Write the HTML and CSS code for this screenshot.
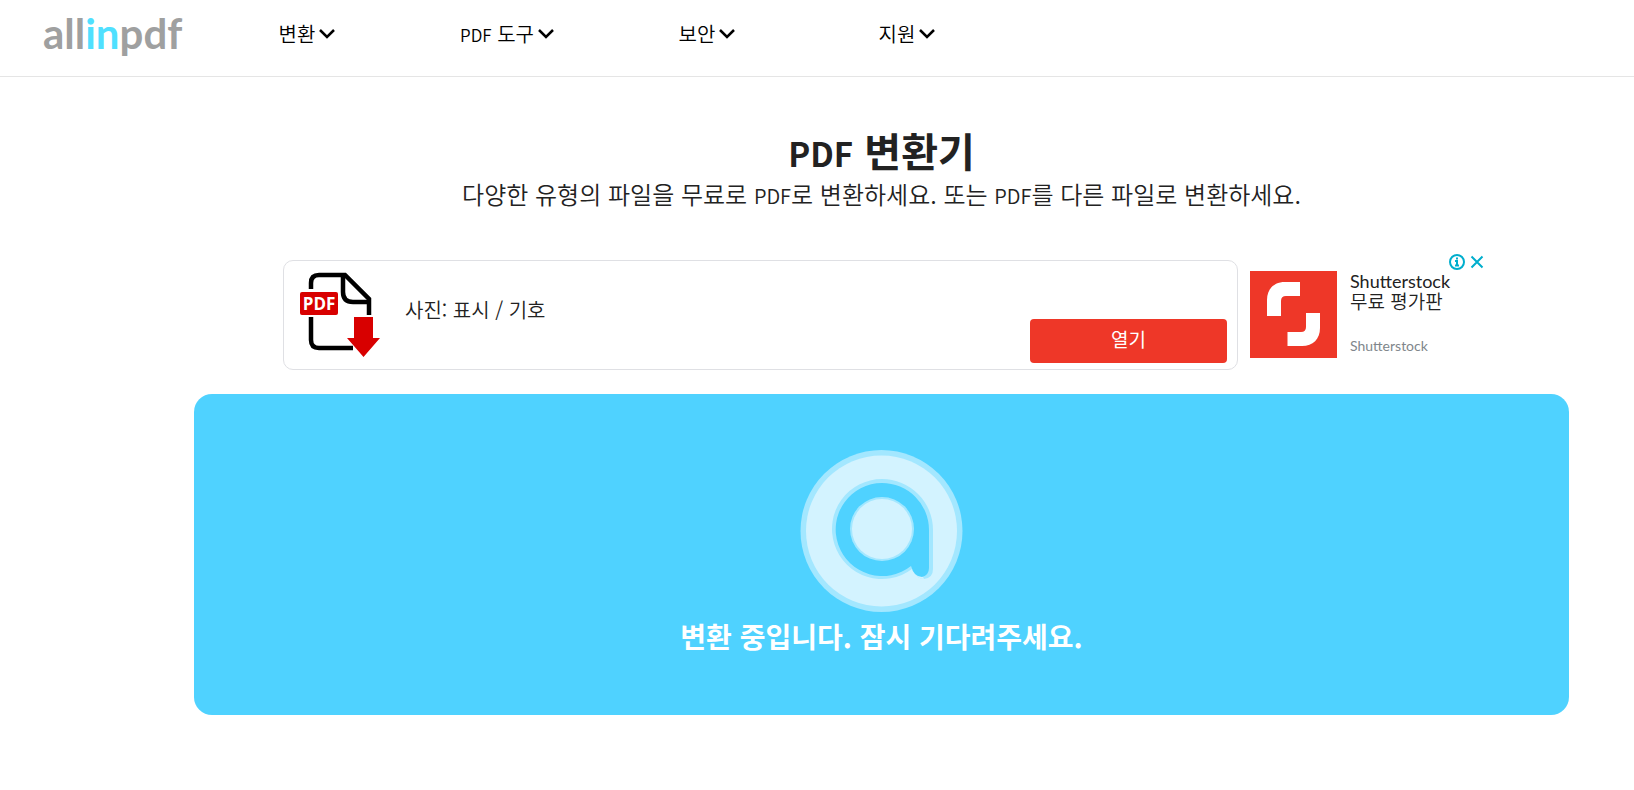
FILE: index.html
```html
<!DOCTYPE html>
<html lang="ko">
<head>
    <meta charset="UTF-8">
    <meta name="viewport" content="width=device-width, initial-scale=1.0">
    <title>PDF 변환기</title>
    <link rel="stylesheet" href="styles.css">
</head>
<body>
    <header class="header">
        <a href="#" class="logo">all<span>in</span>pdf</a>
        <nav class="main-nav">
            <a href="#" class="nav-link">변환<svg class="chevron" viewBox="0 0 16 12"><path d="M1 2l7 7 7-7"/></svg></a>
            <a href="#" class="nav-link"><span><span class="latin">PDF</span> 도구</span><svg class="chevron" viewBox="0 0 16 12"><path d="M1 2l7 7 7-7"/></svg></a>
            <a href="#" class="nav-link">보안<svg class="chevron" viewBox="0 0 16 12"><path d="M1 2l7 7 7-7"/></svg></a>
            <a href="#" class="nav-link">지원<svg class="chevron" viewBox="0 0 16 12"><path d="M1 2l7 7 7-7"/></svg></a>
        </nav>
    </header>

    <main class="content">
        <h1><span class="latin">PDF</span> 변환기</h1>
        <p class="subtitle">다양한 유형의 파일을 무료로 <span class="latin">PDF</span>로 변환하세요. 또는 <span class="latin">PDF</span>를 다른 파일로 변환하세요.</p>

        <!-- Ad banner -->
        <section class="ad">
            <div class="ad-card">
                <svg class="pdf-icon" viewBox="0 0 82 86">
                    <g fill="none" stroke="#000" stroke-width="4.500">
                        <path d="M12 17V11Q12 3 20 3H46L70 27V43"/>
                        <path d="M44 3V20Q44 30 54 30H70"/>
                        <path d="M12 45V68Q12 76 20 76H54"/>
                    </g>
                    <rect x="1" y="20" width="38" height="23" rx="2" fill="#d80000"/>
                    <text x="20" y="38" class="pdf-label">PDF</text>
                    <path d="M55 45H74V66H81L64.500 85 48 66H55z" fill="#d80000"/>
                </svg>
                <p class="ad-text">사진: 표시 / 기호</p>
                <button type="button" class="open-btn">열기</button>
            </div>
            <div class="ad-brand">
                <svg class="brand-logo" viewBox="0 0 87 87">
                    <rect width="87" height="87" fill="#ee3728"/>
                    <path fill="#fff" d="M50 11H35C24 11 17 18 17 29V45H31V30Q31 25 36 25H50zM37.500 75H52C63 75 70 68 70 57V42H56V56Q56 61 51 61H37.500z"/>
                </svg>
                <div class="brand-info">
                    <p class="brand-title">Shutterstock<br><span>무료 평가판</span></p>
                    <p class="brand-name">Shutterstock</p>
                </div>
            </div>
            <div class="ad-controls">
                <button type="button" aria-label="광고 정보">
                    <svg width="16" height="16" viewBox="0 0 16 16"><circle cx="8" cy="8" r="7"/><path d="M6 7h2v4.500M6 11.500h4M7 4.500h2"/></svg>
                </button>
                <button type="button" aria-label="닫기">
                    <svg width="16" height="16" viewBox="0 0 16 16"><path d="M2.500 2.500l11 11M13.500 2.500l-11 11"/></svg>
                </button>
            </div>
        </section>

        <!-- Progress panel -->
        <section class="progress">
            <svg class="spinner" viewBox="0 0 163 162">
                <circle cx="81.500" cy="81" r="81" fill="#a3e7ff"/>
                <circle cx="81.500" cy="81" r="75.500" fill="#d3f3ff"/>
                <path d="M82 29A50 50 0 1 0 112 119Q117 129 124 129Q133 128 133 119V80A51 51 0 0 0 82 29z" fill="#a3e7ff"/>
                <path d="M112 119Q117 129 124 129L118 116z" fill="#d3f3ff"/>
                <path d="M82 33A46.500 46.500 0 1 0 111 116Q114 127 122 127Q129 125 129 118V80A47 47 0 0 0 82 33z" fill="#4fd2ff"/>
                <circle cx="82" cy="79" r="32" fill="#a3e7ff"/>
                <circle cx="82" cy="79" r="30" fill="#d3f3ff"/>
            </svg>
            <p class="progress-text">변환 중입니다. 잠시 기다려주세요.</p>
        </section>
    </main>
</body>
</html>
```
FILE: styles.css
```css
:root {
    --blue: #4fd2ff;
    --red: #ee3728;
    --text: #222;
    --border: #dfe0e4;
}

* {
    margin: 0;
    padding: 0;
    box-sizing: border-box;
}

body {
    font-family: "Noto Sans CJK KR", sans-serif;
    font-weight: 350;
    color: var(--text);
    background: #fff;
}

button {
    font-family: inherit;
    border: none;
    cursor: pointer;
}

/* Keep smaller latin words from growing the line box */
.latin {
    line-height: 1;
}

/* Header */
.header {
    display: flex;
    align-items: flex-start;
    height: 77px;
    padding-left: 43px;
    border-bottom: 1px solid #e5e5e5;
}

.logo {
    width: 164px;
    padding-top: 8px;
    font-family: Lato, sans-serif;
    font-size: 42px;
    font-weight: 700;
    line-height: 50px;
    color: #9fa0a0;
    text-decoration: none;
}

.logo span {
    color: #4fe0ff;
}

.main-nav {
    display: flex;
}

.nav-link {
    display: flex;
    justify-content: center;
    align-items: center;
    gap: 4px;
    width: 200px;
    height: 68px;
    font-size: 20px;
    line-height: 28px;
    color: #000;
    text-decoration: none;
}

.nav-link .latin {
    font-size: 17px;
}

.chevron {
    width: 16px;
    height: 12px;
    fill: none;
    stroke: #000;
    stroke-width: 2.500;
}

/* Main content */
.content {
    padding: 48px 65px 0 194px;
    text-align: center;
}

h1 {
    font-size: 40px;
    font-weight: 700;
    line-height: 50px;
}

h1 .latin {
    font-size: 33px;
}

.subtitle {
    font-size: 24px;
    line-height: 38px;
}

.subtitle .latin {
    font-size: 20px;
}

/* Ad banner */
.ad {
    position: relative;
    display: flex;
    gap: 12px;
    margin: 47px 84px 24px 89px;
    text-align: left;
}

.ad-card {
    display: flex;
    flex: 1;
    align-items: center;
    height: 110px;
    padding: 0 10px 0 15px;
    border: 1px solid var(--border);
    border-radius: 10px;
}

.pdf-icon {
    width: 82px;
    height: 86px;
}

.pdf-label {
    font-family: "Open Sans", sans-serif;
    font-size: 17px;
    font-weight: 700;
    fill: #fff;
    text-anchor: middle;
}

.ad-text {
    flex: 1;
    padding: 0 0 12px 24px;
    font-size: 20px;
}

.open-btn {
    align-self: flex-end;
    width: 197px;
    height: 44px;
    margin-bottom: 6px;
    padding-bottom: 4px;
    border-radius: 4px;
    background: var(--red);
    color: #fff;
    font-size: 19px;
    line-height: 28px;
}

.ad-brand {
    display: flex;
    gap: 13px;
    width: 235px;
    padding-top: 11px;
}

.brand-logo {
    width: 87px;
    height: 87px;
}

.brand-title,
.brand-name {
    font-family: Lato, sans-serif;
    font-weight: 400;
    line-height: 20px;
}

.brand-title {
    font-size: 18px;
}

.brand-title span {
    font-family: "Noto Sans CJK KR", sans-serif;
    font-size: 19px;
    font-weight: 350;
}

.brand-name {
    margin-top: 24px;
    font-size: 14px;
    color: #80868b;
}

.ad-controls {
    position: absolute;
    top: -6px;
    right: 0;
    display: flex;
    gap: 4px;
}

.ad-controls button {
    height: 16px;
    background: none;
}

.ad-controls svg {
    display: block;
    fill: none;
    stroke: #00aecd;
    stroke-width: 2;
}

/* Progress panel */
.progress {
    display: flex;
    flex-direction: column;
    align-items: center;
    padding: 56px 0 58px;
    border-radius: 18px;
    background: var(--blue);
}

.spinner {
    width: 163px;
    height: 162px;
}

.progress-text {
    margin-top: 4px;
    font-size: 28px;
    font-weight: 700;
    line-height: 41px;
    color: #fff;
}
```
